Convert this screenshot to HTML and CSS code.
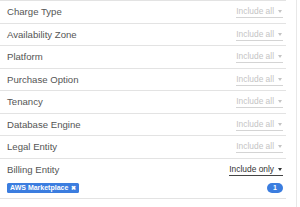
FILE: index.html
```html
<!DOCTYPE html>
<html>
<head>
<meta charset="utf-8">
<link rel="stylesheet" href="styles.css">
</head>
<body>
<div class="panel">
  <div class="list">
    <div class="row"><span class="label">Charge Type</span><span class="dd muted">Include all<i class="caret"></i></span></div>
    <div class="row"><span class="label">Availability Zone</span><span class="dd muted">Include all<i class="caret"></i></span></div>
    <div class="row"><span class="label">Platform</span><span class="dd muted">Include all<i class="caret"></i></span></div>
    <div class="row"><span class="label">Purchase Option</span><span class="dd muted">Include all<i class="caret"></i></span></div>
    <div class="row"><span class="label">Tenancy</span><span class="dd muted">Include all<i class="caret"></i></span></div>
    <div class="row"><span class="label">Database Engine</span><span class="dd muted">Include all<i class="caret"></i></span></div>
    <div class="row"><span class="label">Legal Entity</span><span class="dd muted">Include all<i class="caret"></i></span></div>
    <div class="group">
      <div class="row head"><span class="label">Billing Entity</span><span class="dd active">Include only<i class="caret"></i></span></div>
      <div class="tags">
        <span class="tag">AWS Marketplace <span class="x">&#10006;</span></span>
        <span class="count">1</span>
      </div>
    </div>
  </div>
</div>
</body>
</html>
```

FILE: styles.css
```css
html, body {
  margin: 0;
  padding: 0;
  background: #fff;
}
body {
  font-family: "Liberation Sans", Arial, sans-serif;
}
.panel {
  width: 296px;
  height: 207px;
  border-right: 1px solid #e8e8e8;
  overflow: hidden;
}
.list {
  width: 286px;
}
.row {
  display: flex;
  align-items: center;
  justify-content: space-between;
  height: 21.5px;
  border-top: 1px solid #e3e3e3;
  padding: 0 3px 0 7px;
}
.label {
  font-size: 9.6px;
  color: #555;
}
.dd {
  display: flex;
  align-items: center;
  font-size: 8.4px;
  line-height: 9px;
  padding-bottom: 1px;
  margin-top: 2px;
}
.dd.muted {
  color: #c4c4c4;
  border-bottom: 1px solid #d4d4d4;
}
.dd.active {
  color: #333;
  border-bottom: 1px solid #444;
}
.caret {
  width: 0;
  height: 0;
  border-left: 2.5px solid transparent;
  border-right: 2.5px solid transparent;
  border-top: 3px solid currentColor;
  margin-left: 4px;
  margin-right: 1px;
}
.group {
  border-top: 1px solid #e3e3e3;
  border-bottom: 1px solid #e3e3e3;
  padding-bottom: 5.5px;
}
.group .row.head {
  border-top: none;
}
.tags {
  display: flex;
  align-items: center;
  justify-content: space-between;
  margin-top: 2.5px;
  padding: 0 3px 0 7px;
}
.tag {
  display: inline-flex;
  align-items: center;
  height: 10px;
  padding: 0 3px;
  background: #3b7ddf;
  color: #fff;
  font-size: 7px;
  font-weight: bold;
  border-radius: 1.5px;
}
.tag .x {
  font-size: 5.5px;
  margin-left: 3px;
}
.count {
  display: inline-flex;
  align-items: center;
  justify-content: center;
  width: 16px;
  height: 10px;
  border-radius: 5px;
  background: #3b7ddf;
  color: #fff;
  font-size: 7px;
  font-weight: bold;
}
```
